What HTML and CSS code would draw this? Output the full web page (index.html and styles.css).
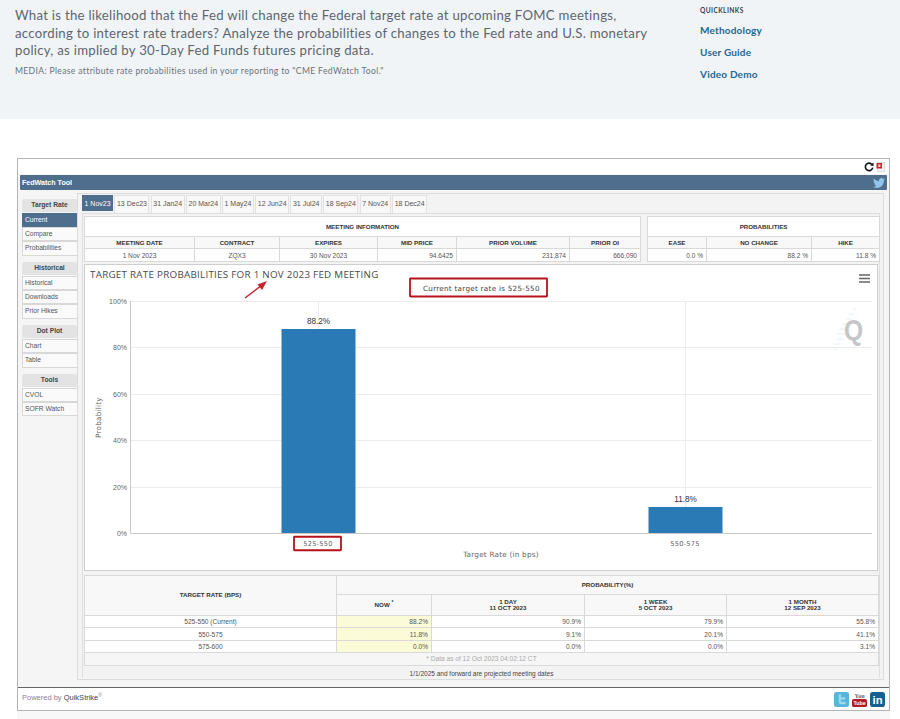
FILE: index.html
```html
<!DOCTYPE html>
<html lang="en">
<head>
<meta charset="utf-8">
<title>CME FedWatch Tool</title>
<link rel="stylesheet" href="styles.css">
</head>
<body>
<section class="band">
  <div class="intro">
    <p class="lead">What is the likelihood that the Fed will change the Federal target rate at upcoming FOMC meetings, according to interest rate traders? Analyze the probabilities of changes to the Fed rate and U.S. monetary policy, as implied by 30-Day Fed Funds futures pricing data.</p>
    <p class="media">MEDIA: Please attribute rate probabilities used in your reporting to "CME FedWatch Tool."</p>
  </div>
  <nav class="quick">
    <h2>QUICKLINKS</h2>
    <a>Methodology</a>
    <a>User Guide</a>
    <a>Video Demo</a>
  </nav>
</section>

<section class="widget">
  <div class="toolbar">
    <svg class="ico-refresh" viewBox="0 0 10 10"><path d="M8 2.600A3.700 3.700 0 1 0 8.700 5.600" fill="none" stroke="#111" stroke-width="1.600"/><path d="M6.200 3.600L9.600 3.900 9.400 .4z" fill="#111"/></svg>
    <svg class="ico-pdf" viewBox="0 0 9 10"><path d="M1.500 .5h7v9h-7z" fill="#f2f2f2" stroke="#c8c8c8" stroke-width=".6"/><path d="M.5 1h5.500v5.500H.5z" fill="#d2202a"/><path d="M2.200 2.400h2.200v2.600H2.200z" fill="#f8d4d4"/></svg>
  </div>
  <header class="titlebar">
    <span>FedWatch Tool</span>
    <svg class="ico-bird" viewBox="0 0 24 24"><path d="M23.953 4.570a10 10 0 01-2.825.775 4.958 4.958 0 002.163-2.723c-.951.555-2.005.959-3.127 1.184a4.920 4.920 0 00-8.384 4.482C7.690 8.095 4.067 6.130 1.640 3.162a4.822 4.822 0 00-.666 2.475c0 1.710.870 3.213 2.188 4.096a4.904 4.904 0 01-2.228-.616v.06a4.923 4.923 0 003.946 4.827 4.996 4.996 0 01-2.212.085 4.936 4.936 0 004.604 3.417 9.867 9.867 0 01-6.102 2.105c-.39 0-.779-.023-1.170-.067a13.995 13.995 0 007.557 2.209c9.053 0 13.998-7.496 13.998-13.985 0-.21 0-.42-.015-.63A9.935 9.935 0 0024 4.590z"/></svg>
  </header>
  <div class="body">
    <aside class="side">
      <div class="group">
        <h3>Target Rate</h3>
        <a class="active">Current</a><a>Compare</a><a>Probabilities</a>
      </div>
      <div class="group">
        <h3>Historical</h3>
        <a>Historical</a><a>Downloads</a><a>Prior Hikes</a>
      </div>
      <div class="group">
        <h3>Dot Plot</h3>
        <a>Chart</a><a>Table</a>
      </div>
      <div class="group">
        <h3>Tools</h3>
        <a>CVOL</a><a>SOFR Watch</a>
      </div>
    </aside>
    <main class="panel">
      <div class="tabs">
        <a class="active">1 Nov23</a><a>13 Dec23</a><a>31 Jan24</a><a>20 Mar24</a><a>1 May24</a><a>12 Jun24</a><a>31 Jul24</a><a>18 Sep24</a><a>7 Nov24</a><a>18 Dec24</a>
      </div>
      <div class="content">
        <div class="info-row">
          <table class="grid meeting">
            <colgroup><col class="m1"><col class="m2"><col class="m3"><col class="m4"><col class="m5"><col class="m6"></colgroup>
            <tr class="cap"><th colspan="6">MEETING INFORMATION</th></tr>
            <tr class="hd"><th>MEETING DATE</th><th>CONTRACT</th><th>EXPIRES</th><th>MID PRICE</th><th>PRIOR VOLUME</th><th>PRIOR OI</th></tr>
            <tr class="rw"><td class="c">1 Nov 2023</td><td class="c">ZQX3</td><td class="c">30 Nov 2023</td><td>94.6425</td><td>231,874</td><td>666,090</td></tr>
          </table>
          <table class="grid probs">
            <colgroup><col class="p1"><col class="p2"><col class="p3"></colgroup>
            <tr class="cap"><th colspan="3">PROBABILITIES</th></tr>
            <tr class="hd"><th>EASE</th><th>NO CHANGE</th><th>HIKE</th></tr>
            <tr class="rw"><td>0.0 %</td><td>88.2 %</td><td>11.8 %</td></tr>
          </table>
        </div>

        <svg class="chart" viewBox="84 264 794 307">
          <text class="c-title" x="90" y="277.500">TARGET RATE PROBABILITIES FOR 1 NOV 2023 FED MEETING</text>
          <path class="menu" d="M859 275h11M859 278.500h11M859 282h11"/>
          <rect class="redbox" x="410" y="278.500" width="137" height="18" rx=".5"/>
          <text class="c-sub" x="423" y="290.500">Current target rate is 525-550</text>
          <path class="arrow" d="M245 298L262 285"/>
          <path class="arrow-head" d="M267 281L257.500 284.500 262 290z"/>

          <g class="grid-lines">
            <path d="M131 301.500H872M131 347.500H872M131 394.500H872M131 440.500H872M131 487.500H872"/>
            <path d="M318.500 301V533M685.500 301V533"/>
          </g>
          <path class="axis" d="M130.500 301V533.500H872"/>
          <g class="tick">
            <text x="127" y="303.500">100%</text>
            <text x="127" y="350">80%</text>
            <text x="127" y="397">60%</text>
            <text x="127" y="443">40%</text>
            <text x="127" y="490">20%</text>
            <text x="127" y="536">0%</text>
          </g>
          <g class="q-mark">
            <path d="M853 309h3M849 314h5M846 319h6M842 324h8M840 329h8M837 334h9M836 339h8M834 344h7M834 349h3"/>
            <text x="0" y="0" transform="translate(844 340) scale(.82 1)">Q</text>
          </g>
          <rect class="bar" x="281.500" y="329" width="74" height="204"/>
          <rect class="bar" x="648.500" y="507" width="74" height="26"/>
          <text class="val" x="318.500" y="324">88.2%</text>
          <text class="val" x="685.500" y="502">11.8%</text>
          <rect class="redbox" x="294" y="536.750" width="47" height="13.500" rx=".5"/>
          <text class="cat" x="318" y="545.500">525-550</text>
          <text class="cat" x="685" y="545.500">550-575</text>
          <text class="axis-t" x="501" y="556.500">Target Rate (in bps)</text>
          <text class="axis-t" transform="translate(100.500 417.500) rotate(-90)">Probability</text>
        </svg>

        <table class="grid results">
          <colgroup><col class="r1"><col class="r2"><col class="r3"><col class="r4"><col class="r5"></colgroup>
          <tr class="r-cap"><th rowspan="2">TARGET RATE (BPS)</th><th colspan="4">PROBABILITY(%)</th></tr>
          <tr class="r-hd"><th>NOW <sup>*</sup></th><th>1 DAY<br>11 OCT 2023</th><th>1 WEEK<br>5 OCT 2023</th><th>1 MONTH<br>12 SEP 2023</th></tr>
          <tr class="r-row"><td class="c">525-550 (Current)</td><td class="now">88.2%</td><td>90.9%</td><td>79.9%</td><td>55.8%</td></tr>
          <tr class="r-row"><td class="c">550-575</td><td class="now">11.8%</td><td>9.1%</td><td>20.1%</td><td>41.1%</td></tr>
          <tr class="r-row"><td class="c">575-600</td><td class="now">0.0%</td><td>0.0%</td><td>0.0%</td><td>3.1%</td></tr>
          <tr class="r-note"><td colspan="5">* Data as of 12 Oct 2023 04:02:12 CT</td></tr>
        </table>
        <p class="proj">1/1/2025 and forward are projected meeting dates</p>
      </div>
    </main>
  </div>
  <footer class="foot">
    <span class="powered">Powered by <b>QuikStrike</b><sup>®</sup></span>
    <div class="social">
      <svg class="s-ico" viewBox="0 0 16 16"><rect width="16" height="16" rx="2.500" fill="#55b5da"/><path d="M5 2.500h2.500v3H12v2.500H7.500v2.500H12.500V13H7.500Q5 13 5 10.500z" fill="#9fd8ec"/></svg>
      <svg class="s-ico" viewBox="0 0 16 16"><text class="yt1" x="8" y="6.500">You</text><rect y="7.500" width="16" height="8.500" rx="2" fill="#b31b20"/><text class="yt2" x="8" y="14">Tube</text></svg>
      <svg class="s-ico" viewBox="0 0 16 16"><rect width="16" height="16" rx="3" fill="#14618f"/><text class="li" x="8" y="12.500">in</text></svg>
    </div>
  </footer>
</section>
</body>
</html>
```

FILE: styles.css
```css
* { box-sizing: border-box; }
html, body { margin: 0; padding: 0; }
body { width: 900px; height: 719px; overflow: hidden; background: #fff; font-family: "Liberation Sans", Arial, sans-serif; }

.band { height: 119px; background: #f1f4f7; display: flex; padding: 7px 0 0 15px; }
.intro { width: 685px; }
.lead { margin: 0; width: 650px; font: 13.2px/17.6px Lato, sans-serif; letter-spacing: .27px; color: #5c6670; }
.media { margin: 5px 0 0; font: 8.6px/12px Lato, sans-serif; letter-spacing: .34px; color: #6a737b; }
.quick { display: flex; flex-direction: column; margin-top: -2px; }
.quick h2 { margin: 0 0 9px; font: 700 6.6px/10px Lato, sans-serif; letter-spacing: .4px; color: #38424c; }
.quick a { font: 700 10px/12px Lato, sans-serif; letter-spacing: .2px; color: #24678f; margin-bottom: 10px; }

.widget { width: 873px; height: 553px; margin: 39px 0 0 17px; border: 1px solid #b4b4b4; display: flex; flex-direction: column; background: #f5f5f5; box-shadow: 0 8px 0 #f8f8f8; }
.toolbar { height: 15px; flex: none; background: #fff; display: flex; justify-content: flex-end; align-items: center; gap: 2px; padding-right: 4px; }
.ico-refresh { width: 10px; height: 10px; }
.ico-pdf { width: 9px; height: 10px; }
.titlebar { height: 15px; flex: none; margin: 1px 2px 0; background: #4f6d8c; border-radius: 1px; color: #fff; font-weight: 700; font-size: 7.1px; display: flex; align-items: center; justify-content: space-between; padding: 0 2px; }
.ico-bird { width: 12px; height: 12px; fill: #93c6ea; }

.body { flex: 1; display: flex; align-items: flex-start; padding: 3px 5px 0 4px; }
.side { width: 55px; flex: none; display: flex; flex-direction: column; padding-top: 6px; gap: 6.5px; }
.group { display: flex; flex-direction: column; }
.group h3 { margin: 0 0 1px; height: 12.5px; background: #e3e3e3; border-radius: 2px; font: 700 6.7px/12.5px "Liberation Sans", sans-serif; color: #444; text-align: center; }
.group a { height: 14.4px; background: #fafafa; border: 1px solid #d8d8d8; border-right: 0; font-size: 6.7px; line-height: 12px; padding-left: 2px; color: #555; }
.group a.active { background: #4f6d8c; border-color: #4f6d8c; color: #fff; }

.panel { flex: 1; height: 487px; border: 1px solid #dcdcdc; background: #f3f3f3; padding: 1px 2px 0 4px; }
.tabs { display: flex; gap: 1.4px; height: 18px; align-items: stretch; }
.tabs a { font-size: 7px; line-height: 15px; padding: 0 1.5px; background: #f8f8f8; border: 1px solid #e2e2e2; border-bottom: 0; color: #555; white-space: nowrap; }
.tabs a.active { background: #4f6d8c; border-color: #4f6d8c; color: #fff; height: 16px; }
.content { margin-top: 0; border: 1px solid #dedede; border-bottom: 0; padding: 2px 0 0 1px; height: 465px; width: 798px; }

.info-row { display: flex; gap: 6px; height: 48px; width: 795px; }
.grid { border-collapse: collapse; table-layout: fixed; background: #fff; font-size: 6.6px; color: #555; }
.grid th, .grid td { border: 1px solid #d9d9d9; padding: 0 3px; font-weight: 400; text-align: right; }
.grid th { font-weight: 700; font-size: 6.2px; color: #333; text-align: center; background: #f8f8f8; }
.grid td.c { text-align: center; }
.meeting { width: 556px; height: 45px; }
.probs { width: 232px; height: 45px; }
.m1 { width: 110px; } .m2 { width: 85px; } .m3 { width: 98px; } .m4 { width: 79px; } .m5 { width: 113px; } .m6 { width: 71px; }
.p1 { width: 59px; } .p2 { width: 105px; } .p3 { width: 68px; }
.cap { height: 20px; } .hd { height: 12px; } .rw { height: 13px; }
.cap th { background: #fff; }

.chart { display: block; width: 794px; height: 307px; background: #fff; outline: 1px solid #cfcfcf; outline-offset: -1px; }
.c-title { font: 9.8px "Open Sans", sans-serif; letter-spacing: .27px; fill: #4a4a4a; }
.c-sub { font: 7.2px "DejaVu Sans", sans-serif; letter-spacing: .28px; fill: #444; }
.redbox { fill: none; stroke: #b5121b; stroke-width: 1.8; }
.menu { stroke: #666; stroke-width: 1.5; fill: none; }
.arrow { stroke: #c8222a; stroke-width: 1.5; }
.arrow-head { fill: #c8222a; }
.grid-lines path { stroke: #ececec; stroke-width: 1; fill: none; }
.axis { stroke: #c8c8c8; stroke-width: 1; fill: none; }
.tick text { font: 7px "Liberation Sans", sans-serif; text-anchor: end; fill: #666; }
.bar { fill: #2a7ab5; }
.val { font: 8.2px "Liberation Sans", sans-serif; text-anchor: middle; fill: #333; }
.cat { font: 6.6px "DejaVu Sans", sans-serif; letter-spacing: .3px; text-anchor: middle; fill: #666; }
.axis-t { font: 7.3px "DejaVu Sans", sans-serif; letter-spacing: .2px; text-anchor: middle; fill: #666; }
.q-mark path { stroke: #e4f2f7; stroke-width: 1.2; fill: none; }
.q-mark text { font: 700 30px "Liberation Sans", sans-serif; fill: #c4c6c7; }

.results { width: 794px; height: 90px; margin-top: 4px; }
.r1 { width: 252px; } .r2 { width: 95px; } .r3 { width: 153px; } .r4 { width: 142px; } .r5 { width: 152px; }
.r-cap { height: 19px; } .r-hd { height: 21px; }
.r-row { height: 12.4px; }
.r-note { height: 12.500px; }
.r-note td { text-align: center; background: #f6f6f6; color: #aaa; }
.results th { line-height: 6.5px; }
.results th sup { font-size: 5px; line-height: 0; }
.now { background: #fbfbd8; }
.proj { margin: 0; height: 15px; font-size: 6.5px; line-height: 16px; text-align: center; color: #444; width: 795px; }

.foot { flex: none; height: 23px; background: #fff; border-top: 1px solid #666; display: flex; justify-content: space-between; align-items: center; padding: 0 4px 0 4px; }
.powered { font-size: 7.5px; color: #888; margin-top: -4px; }
.powered b { font-weight: 400; color: #2c4a5a; }
.powered sup { font-size: 5px; line-height: 0; }
.social { display: flex; gap: 3px; }
.s-ico { width: 15px; height: 15px; }
.yt1 { font: 700 6.5px "Liberation Serif", serif; text-anchor: middle; fill: #666; }
.yt2 { font: 700 5.6px "Liberation Sans", sans-serif; text-anchor: middle; fill: #fff; }
.li { font: 700 12px "Liberation Sans", sans-serif; text-anchor: middle; fill: #fff; }
```
